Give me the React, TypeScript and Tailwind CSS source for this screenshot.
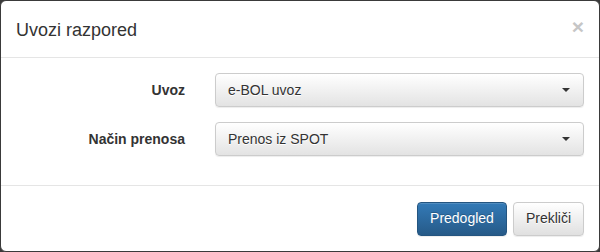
import React from "react";

const font = { fontFamily: '"Liberation Sans", Arial, sans-serif' };

function Select({ value }: { value: string }) {
  return (
    <div className="flex-1 h-[34px] flex items-center justify-between px-[12px] rounded-[4px] border border-[#cccccc] bg-[linear-gradient(to_bottom,#ffffff_0%,#e3e3e3_100%)] shadow-[inset_0_1px_0_rgba(255,255,255,0.15),0_1px_1px_rgba(0,0,0,0.075)] text-[14px] text-[#333333] [text-shadow:0_1px_0_#fff]">
      <span>{value}</span>
      <span className="w-0 h-0 border-t-[4px] border-t-[#333333] border-x-[4px] border-x-transparent mr-[1px]" />
    </div>
  );
}

export default function App() {
  return (
    <div className="w-[600px] h-[252px] bg-[#3a3a3a]" style={font}>
      <div className="w-[600px] h-[252px] bg-white border border-[#3a3a3a] rounded-[6px] flex flex-col text-[#333333]">
        <div className="h-[57px] px-[15px] border-b border-[#e5e5e5] flex items-center justify-between">
          <h4 className="text-[18px] leading-[26px] text-[#333333] mt-[1px]">Uvozi razpored</h4>
          <span className="text-[21px] font-bold leading-none text-[#c6c6c6] [text-shadow:0_1px_0_#fff] -mt-[5px]">×</span>
        </div>
        <div className="px-[15px] pt-[15px] pb-[29px] flex flex-col gap-[15px] border-b border-[#e5e5e5]">
          <div className="flex items-center gap-[30px]">
            <label className="w-[169px] text-right font-bold text-[14px] text-[#333333]">Uvoz</label>
            <Select value="e-BOL uvoz" />
          </div>
          <div className="flex items-center gap-[30px]">
            <label className="w-[169px] text-right font-bold text-[14px] text-[#333333]">Način prenosa</label>
            <Select value="Prenos iz SPOT" />
          </div>
        </div>
        <div className="flex-1 px-[15px] flex items-center justify-end gap-[6px]">
          <button className="h-[34px] px-[12px] rounded-[4px] border border-[#245580] bg-[linear-gradient(to_bottom,#337ab7_0%,#265a88_100%)] text-white text-[14px] [text-shadow:0_-1px_0_rgba(0,0,0,0.2)] shadow-[inset_0_1px_0_rgba(255,255,255,0.15),0_1px_1px_rgba(0,0,0,0.075)]">
            Predogled
          </button>
          <button className="h-[34px] px-[12px] rounded-[4px] border border-[#cccccc] bg-[linear-gradient(to_bottom,#ffffff_0%,#e0e0e0_100%)] text-[#333333] text-[14px] [text-shadow:0_1px_0_#fff] shadow-[inset_0_1px_0_rgba(255,255,255,0.15),0_1px_1px_rgba(0,0,0,0.075)]">
            Prekliči
          </button>
        </div>
      </div>
    </div>
  );
}
